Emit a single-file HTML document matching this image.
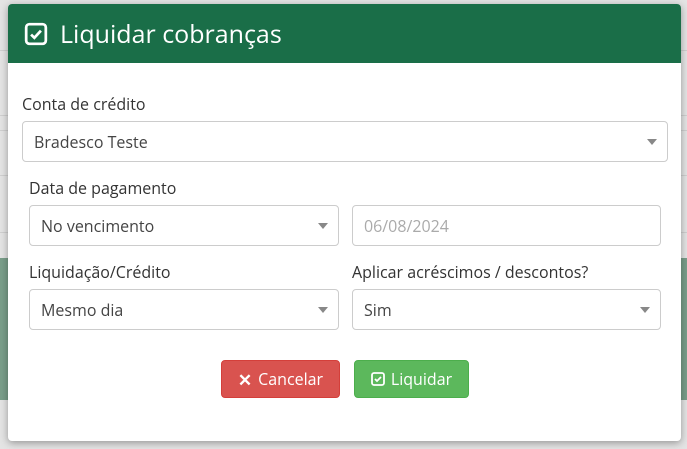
<!DOCTYPE html>
<html><head><meta charset="utf-8"><style>
*{box-sizing:border-box;margin:0;padding:0}
body{width:687px;height:449px;overflow:hidden;background:#e4e4e4;font-family:"Open Sans","Liberation Sans",sans-serif;position:relative}
.band{position:absolute;left:0;width:687px;height:1px;background:#d0d0d0}
.tbl{position:absolute;left:0;top:258px;width:687px;height:142px;background:#7a9e8a}
.modal{position:absolute;left:8px;top:4px;width:673px;height:437px;background:#fff;border-radius:4px;box-shadow:0 2px 8px rgba(0,0,0,.35);overflow:hidden}
.hdr{height:59px;background:#1a6e48;color:#fff;font-size:25px;display:flex;align-items:center;padding-left:16px}
.hdr svg{margin-right:12px}
.lbl{position:absolute;font-size:16px;color:#333}
.fld{position:absolute;height:41px;border:1px solid #ccc;border-radius:4px;font-size:16px;color:#444;padding-left:11px;line-height:41px}
.fld.sel:after{content:"";position:absolute;right:10px;top:17px;border-left:5px solid transparent;border-right:5px solid transparent;border-top:6px solid #888}
.btn{position:absolute;top:356px;height:38px;border-radius:4px;color:#fff;font-size:16px;display:flex;align-items:center;justify-content:center;gap:6px}
</style></head><body>
<div class="band" style="top:50px"></div><div class="band" style="top:115px"></div><div class="band" style="top:130px"></div><div class="band" style="top:175px"></div><div class="band" style="top:232px"></div>
<div class="tbl"></div>
<div class="modal">
<div class="hdr"><svg width="24" height="24" viewBox="0 0 22 22"><rect x="2" y="2" width="18" height="18" rx="3" fill="none" stroke="#fff" stroke-width="2.5"/><path d="M6.5 11.5l3 3 6-6.5" fill="none" stroke="#fff" stroke-width="2.5"/></svg>Liquidar cobranças</div>
<div class="lbl" style="left:14px;top:89px">Conta de crédito</div>
<div class="fld sel" style="left:14px;top:117px;width:646px">Bradesco Teste</div>
<div class="lbl" style="left:21px;top:173px">Data de pagamento</div>
<div class="fld sel" style="left:21px;top:201px;width:310px">No vencimento</div>
<div class="fld" style="left:344px;top:201px;width:309px;color:#aaa">06/08/2024</div>
<div class="lbl" style="left:21px;top:257px">Liquidação/Crédito</div>
<div class="lbl" style="left:344px;top:257px">Aplicar acréscimos / descontos?</div>
<div class="fld sel" style="left:21px;top:285px;width:310px">Mesmo dia</div>
<div class="fld sel" style="left:344px;top:285px;width:309px">Sim</div>
<div class="btn" style="left:213px;width:119px;background:#d9534f;border:1px solid #d43f3a"><span style="font-weight:bold;font-size:17px">✕</span>Cancelar</div>
<div class="btn" style="left:346px;width:115px;background:#5cb85c;border:1px solid #4cae4c"><svg width="14" height="14" viewBox="0 0 14 14"><rect x="1" y="1" width="12" height="12" rx="2" fill="none" stroke="#fff" stroke-width="1.8"/><path d="M4 7l2 2 4-4" fill="none" stroke="#fff" stroke-width="1.8"/></svg>Liquidar</div>
</div>
</body></html>
